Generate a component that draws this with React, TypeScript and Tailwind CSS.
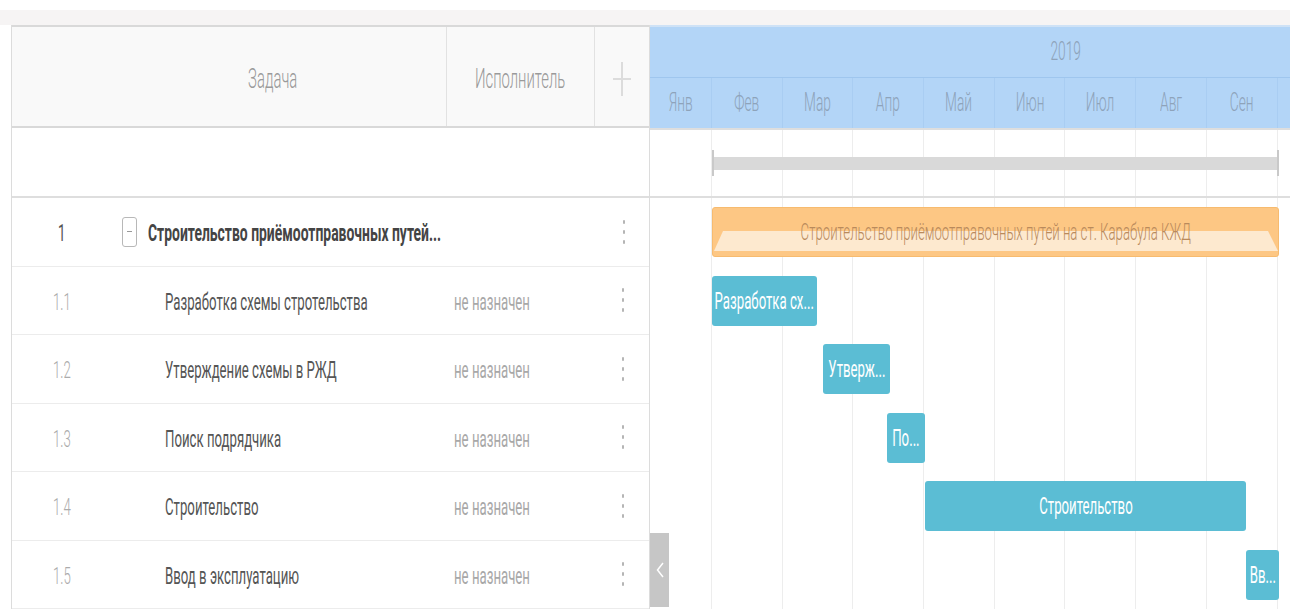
import React from 'react';

const FONT = "font-['Roboto','Liberation_Sans',sans-serif]";

type TxtProps = { children: React.ReactNode; className?: string; center?: boolean; wide?: boolean };

// Narrow text: the chart renders in a condensed face
function Txt({ children, className = '', center = false, wide = false }: TxtProps) {
  return (
    <span
      className={`inline-block whitespace-nowrap ${wide ? 'scale-x-[0.58]' : 'scale-x-[0.55]'} ${
        center ? 'origin-center' : 'origin-left'
      } ${className}`}
    >
      {children}
    </span>
  );
}

const months = ['Фев', 'Мар', 'Апр', 'Май', 'Июн', 'Июл', 'Авг', 'Сен'];

const tasks = [
  { num: '1.1', name: 'Разработка схемы стротельства', bar: 'Разработка сх...', left: 62, width: 105 },
  { num: '1.2', name: 'Утверждение схемы в РЖД', bar: 'Утверж...', left: 173, width: 67 },
  { num: '1.3', name: 'Поиск подрядчика', bar: 'По...', left: 237, width: 38 },
  { num: '1.4', name: 'Строительство', bar: 'Строительство', left: 275, width: 321 },
  { num: '1.5', name: 'Ввод в эксплуатацию', bar: 'Вв...', left: 596, width: 33 },
];

function Dots() {
  return (
    <div className="flex flex-col items-center gap-[6px]">
      <span className="w-[2px] h-[4px] rounded-full bg-[#b5b5b5]" />
      <span className="w-[2px] h-[4px] rounded-full bg-[#b5b5b5]" />
      <span className="w-[2px] h-[4px] rounded-full bg-[#b5b5b5]" />
    </div>
  );
}

function GridColumns() {
  return (
    <div className="absolute inset-0 flex pointer-events-none">
      <div className="w-[62px] shrink-0 border-r border-[#ededed]" />
      {months.map((m) => (
        <div key={m} className="w-[70.7px] shrink-0 border-r border-[#ededed]" />
      ))}
    </div>
  );
}

export default function App() {
  return (
    <div className={`w-[1290px] h-[616px] overflow-hidden bg-white ${FONT}`}>
      <div className="h-[10px] bg-white" />
      <div className="h-[15px] bg-[#f6f4f4]" />

      <div className="flex pl-[11px]">
        {/* task grid */}
        <div className="w-[638px] shrink-0 border-l border-[#dcdcdc]">
          <div className="h-[103px] flex border-t-2 border-b-2 border-[#d9d9d9] bg-[#f9f9f9] text-[#9a9a9a]">
            <div className="w-[435px] flex items-center justify-center pl-[88px] pt-[6px] border-r border-[#e2e2e2]">
              <Txt center className="text-[27px] font-light">Задача</Txt>
            </div>
            <div className="w-[148px] flex items-center justify-center pt-[6px] border-r border-[#e2e2e2]">
              <Txt center className="text-[27px] font-light">Исполнитель</Txt>
            </div>
            <div className="flex-1 flex items-center justify-center pt-[4px]">
              <svg width="20" height="38" viewBox="0 0 20 38">
                <path d="M10 2v34M1 19h18" stroke="#dcdcdc" strokeWidth="2" fill="none" />
              </svg>
            </div>
          </div>

          <div className="h-[70px] border-b-2 border-[#dedede]" />

          <div className="h-[68.5px] flex items-center border-b border-[#ececec]">
            <div className="w-[100px] pl-[46px] pt-[3px] text-[#555]">
              <Txt className="text-[24px]">1</Txt>
            </div>
            <div className="w-[15px] h-[30px] ml-[10px] rounded-[3px] border border-[#b8b8b8] flex items-center justify-center">
              <span className="w-[5px] h-[1px] bg-[#999]" />
            </div>
            <div className="w-[460px] pl-[11px] pt-[3px] text-[#444]">
              <Txt wide className="text-[24px] font-bold">Строительство приёмоотправочных путей...</Txt>
            </div>
            <div className="flex-1 flex justify-center pl-[2px]">
              <Dots />
            </div>
          </div>

          {tasks.map((t) => (
            <div key={t.num} className="h-[68.5px] flex items-center border-b border-[#ececec]">
              <div className="w-[153px] pl-[41px] pt-[3px] text-[#ababab]">
                <Txt className="text-[24px] font-light">{t.num}</Txt>
              </div>
              <div className="w-[289px] pt-[3px] text-[#555]">
                <Txt className="text-[24px]">{t.name}</Txt>
              </div>
              <div className="w-[141px] pt-[3px] text-[#a8a8a8]">
                <Txt className="text-[24px]">не назначен</Txt>
              </div>
              <div className="flex-1 flex justify-center pl-[2px]">
                <Dots />
              </div>
            </div>
          ))}
        </div>

        {/* timeline */}
        <div className="w-[641px] shrink-0 border-l border-[#dcdcdc] relative">
          <div className="bg-[#b3d5f7] border-t-2 border-[#cfe2f6] text-[#8ea3ba]">
            <div className="h-[51px] flex border-b border-[#9fc6ee] overflow-hidden">
              <div className="w-[832px] shrink-0 flex items-center justify-center">
                <Txt center className="text-[25px] font-light">2019</Txt>
              </div>
            </div>
            <div className="h-[50px] flex">
              <div className="w-[62px] shrink-0 flex items-center justify-center border-r border-[#a9cdf2]">
                <Txt center className="text-[25px] font-light">Янв</Txt>
              </div>
              {months.map((m) => (
                <div
                  key={m}
                  className="w-[70.7px] shrink-0 flex items-center justify-center border-r border-[#a9cdf2]"
                >
                  <Txt center className="text-[25px] font-light">{m}</Txt>
                </div>
              ))}
            </div>
          </div>

          <div className="relative">
            <GridColumns />

            {/* project span */}
            <div className="relative h-[70px] border-t-2 border-b-2 border-[#dedede] flex items-center">
              <div className="ml-[62px] w-[567px] h-[26px] relative flex items-center">
                <span className="absolute left-0 top-0 w-[2px] h-[26px] bg-[#c9c9c9]" />
                <span className="absolute right-0 top-0 w-[2px] h-[26px] bg-[#c9c9c9]" />
                <div className="w-full h-[13px] bg-[#d9d9d9]" />
              </div>
            </div>

            {/* summary task */}
            <div className="relative h-[68.5px] pt-[9px]">
              <div className="ml-[62px] w-[567px] h-[50px] relative rounded-[3px] bg-[#fdc784] border border-[#f7bb6f] overflow-hidden">
                <svg className="absolute left-0 bottom-[3px]" width="567" height="22" viewBox="0 0 567 22">
                  <polygon points="10,0 555,0 565,20 1,20" fill="#fde9cf" />
                </svg>
                <div className="absolute inset-0 flex items-center justify-center text-[#b98a5c]">
                  <Txt center className="text-[24px] font-light">
                    Строительство приёмоотправочных путей на ст. Карабула КЖД
                  </Txt>
                </div>
              </div>
            </div>

            {tasks.map((t) => (
              <div key={t.num} className="relative h-[68.5px] flex items-center">
                <div
                  className="h-[50px] rounded-[3px] bg-[#5bbdd4] flex items-center justify-center overflow-hidden text-white"
                  style={{ marginLeft: t.left, width: t.width }}
                >
                  <Txt center className="text-[24px]">{t.bar}</Txt>
                </div>
              </div>
            ))}

            <div className="absolute left-0 top-[405px] w-[19px] h-[74px] bg-[#c6c6c6] flex items-center justify-center">
              <svg width="8" height="16" viewBox="0 0 8 16">
                <path d="M7 1L1.5 8L7 15" stroke="#ffffff" strokeWidth="1.5" fill="none" />
              </svg>
            </div>
          </div>
        </div>
      </div>
    </div>
  );
}
